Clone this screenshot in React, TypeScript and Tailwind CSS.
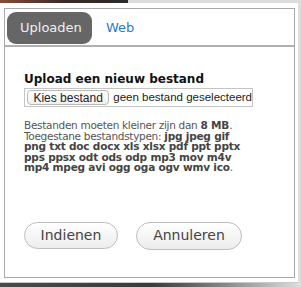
import React from "react";

const lucida = { fontFamily: '"DejaVu Sans", "Noto Sans", sans-serif' };
const helv = { fontFamily: '"Liberation Sans", Arial, sans-serif' };

export default function App() {
  return (
    <div className="w-[301px] h-[287px] overflow-hidden bg-[#e2e2e2] flex flex-col">
      <div className="h-[3px] flex shrink-0">
        <div className="w-[128px] bg-gradient-to-r from-[#8a4a36] via-[#3a2a26] to-[#2b2b2b]" />
        <div className="flex-1 bg-[#dcdcdc]" />
      </div>
      <div className="flex flex-1">
        <div className="w-[298px] bg-white pt-[5px] pl-[4px] pr-[3px] pb-[4px] border-b border-[#c8c8c8]">
          <div className="h-[270px] border border-[#a9a9a9] flex flex-col">
            <div className="flex items-center pt-[3px] pl-[2px] pb-[1px] border-b-2 border-[#b0b0b0]">
              <div
                className="h-[32px] w-[85px] rounded-[9px] bg-[#666666] text-[#f0f0f0] text-[13px] flex items-center pl-[13px]"
                style={lucida}
              >
                Uploaden
              </div>
              <div className="ml-[14px] text-[13px] text-[#2a7acc]" style={lucida}>
                Web
              </div>
            </div>
            <div className="pl-[19px] pt-[24px]">
              <div className="text-[12px] font-bold text-[#111] leading-[16px]" style={lucida}>
                Upload een nieuw bestand
              </div>
              <div className="mt-[1px] w-[229px] h-[19px] border border-[#c4c4c4] flex items-center pl-[2px] whitespace-nowrap">
                <div
                  className="h-[15px] w-[84px] rounded-[4px] border border-[#b8b8b8] bg-gradient-to-b from-white to-[#f0f0f0] text-[12px] text-[#222] flex items-center justify-center"
                  style={helv}
                >
                  Kies bestand
                </div>
                <div className="ml-[4px] text-[11.5px] text-[#222]" style={helv}>
                  geen bestand geselecteerd
                </div>
              </div>
              <div
                className="mt-[13px] text-[10.5px] tracking-[-0.3px] leading-[10.6px] text-[#555] whitespace-nowrap"
                style={lucida}
              >
                Bestanden moeten kleiner zijn dan <b className="text-[#444] tracking-[-0.2px]">8 MB</b>.
                <br />
                Toegestane bestandstypen: <b className="text-[#444] tracking-[-0.2px]">jpg jpeg gif</b>
                <br />
                <b className="text-[#444] tracking-[-0.2px]">png txt doc docx xls xlsx pdf ppt pptx</b>
                <br />
                <b className="text-[#444] tracking-[-0.2px]">pps ppsx odt ods odp mp3 mov m4v</b>
                <br />
                <b className="text-[#444] tracking-[-0.2px]">mp4 mpeg avi ogg oga ogv wmv ico</b>.
              </div>
              <div className="flex gap-[18px] mt-[49px]">
                <div
                  className="h-[27px] w-[94px] rounded-full border border-[#bdbdbd] bg-gradient-to-b from-white to-[#ececec] text-[14px] text-[#444] flex items-center justify-center"
                  style={lucida}
                >
                  Indienen
                </div>
                <div
                  className="h-[28px] w-[106px] rounded-full border border-[#bdbdbd] bg-gradient-to-b from-white to-[#ececec] text-[14px] text-[#444] flex items-center justify-center"
                  style={lucida}
                >
                  Annuleren
                </div>
              </div>
            </div>
          </div>
        </div>
        <div className="flex-1 bg-[#dedede]" />
      </div>
      <div className="h-[5px] shrink-0 bg-gradient-to-r from-[#4a4a4a] via-[#3a3a3a] to-[#e0e0e0]" />
    </div>
  );
}
